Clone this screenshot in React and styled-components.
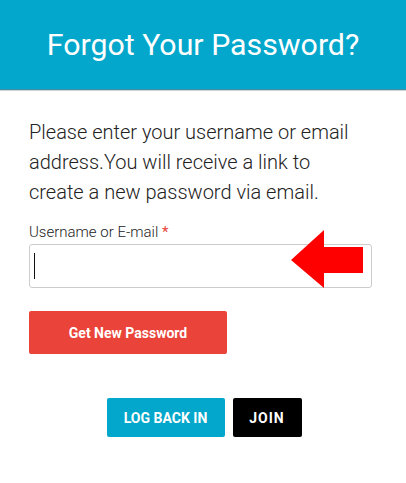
import React from "react";
import styled, { createGlobalStyle } from "styled-components";

const Global = createGlobalStyle`
  html, body { margin: 0; padding: 0; background: #fff; }
  body { font-family: Roboto, "Noto Sans", Arial, sans-serif; }
  * { box-sizing: border-box; }
`;

const Page = styled.div`
  width: 406px;
  height: 483px;
  background: #fff;
`;

const Header = styled.header`
  height: 90px;
  background: #03a7cb;
  border-bottom: 1px solid #3f8fa6;
  box-shadow: 0 1px 0 #d2d2d2;
  display: flex;
  align-items: center;
  justify-content: center;
`;

const Title = styled.h1`
  margin: 0;
  color: #fff;
  font-weight: 400;
  font-size: 30.3px;
  padding-bottom: 1px;
`;

const Body = styled.main`
  padding: 27px 29px 0 29px;
  display: flex;
  flex-direction: column;
`;

const Intro = styled.p`
  margin: 0;
  max-width: 330px;
  font-size: 20px;
  line-height: 30px;
  color: #222;
  font-weight: 300;
`;

const Label = styled.label`
  margin-top: 16px;
  font-size: 15px;
  font-weight: 300;
  color: #222;
  line-height: 18px;
`;

const Req = styled.span`
  color: #e8423a;
  font-weight: 400;
`;

const FieldWrap = styled.div`
  position: relative;
  margin-top: 3px;
  width: 343px;
`;

const Input = styled.div`
  height: 44px;
  border: 1px solid #ccc;
  border-radius: 3px;
  background: #fff;
  display: flex;
  align-items: center;
  padding-left: 4px;
`;

const Caret = styled.span`
  width: 1px;
  height: 26px;
  background: #111;
`;

const Arrow = styled.svg`
  position: absolute;
  left: 262px;
  top: -14px;
`;

const Primary = styled.button`
  margin-top: 23px;
  width: 198px;
  height: 43px;
  border: none;
  border-radius: 2px;
  background: #ea4339;
  color: #fff;
  font-family: inherit;
  font-weight: 700;
  font-size: 14px;
  padding: 0;
`;

const Actions = styled.div`
  display: flex;
  justify-content: center;
  gap: 8px;
  margin-top: 44px;
  padding-left: 2px;
`;

const SmallBtn = styled.button`
  height: 39px;
  width: ${(p) => p.$w}px;
  border: none;
  border-radius: 2px;
  background: ${(p) => p.$bg};
  color: #fff;
  font-family: inherit;
  font-weight: 700;
  font-size: 14px;
  letter-spacing: ${(p) => p.$ls || 0}px;
  text-transform: uppercase;
  padding: 0;
`;

export default function App() {
  return (
    <Page>
      <Global />
      <Header>
        <Title>Forgot Your Password?</Title>
      </Header>
      <Body>
        <Intro>
          Please enter your username or email address.You will receive a link to create a new
          password via email.
        </Intro>
        <Label>
          Username or E-mail <Req>*</Req>
        </Label>
        <FieldWrap>
          <Input>
            <Caret />
          </Input>
          <Arrow width="74" height="60" viewBox="0 0 74 60">
            <polygon points="0,30 33,0 33,17 72,17 72,43 33,43 33,58" fill="#ff0000" />
          </Arrow>
        </FieldWrap>
        <Primary>Get New Password</Primary>
        <Actions>
          <SmallBtn $w={118} $bg="#03a7cb">Log Back In</SmallBtn>
          <SmallBtn $w={69} $bg="#000" $ls={1}>Join</SmallBtn>
        </Actions>
      </Body>
    </Page>
  );
}
